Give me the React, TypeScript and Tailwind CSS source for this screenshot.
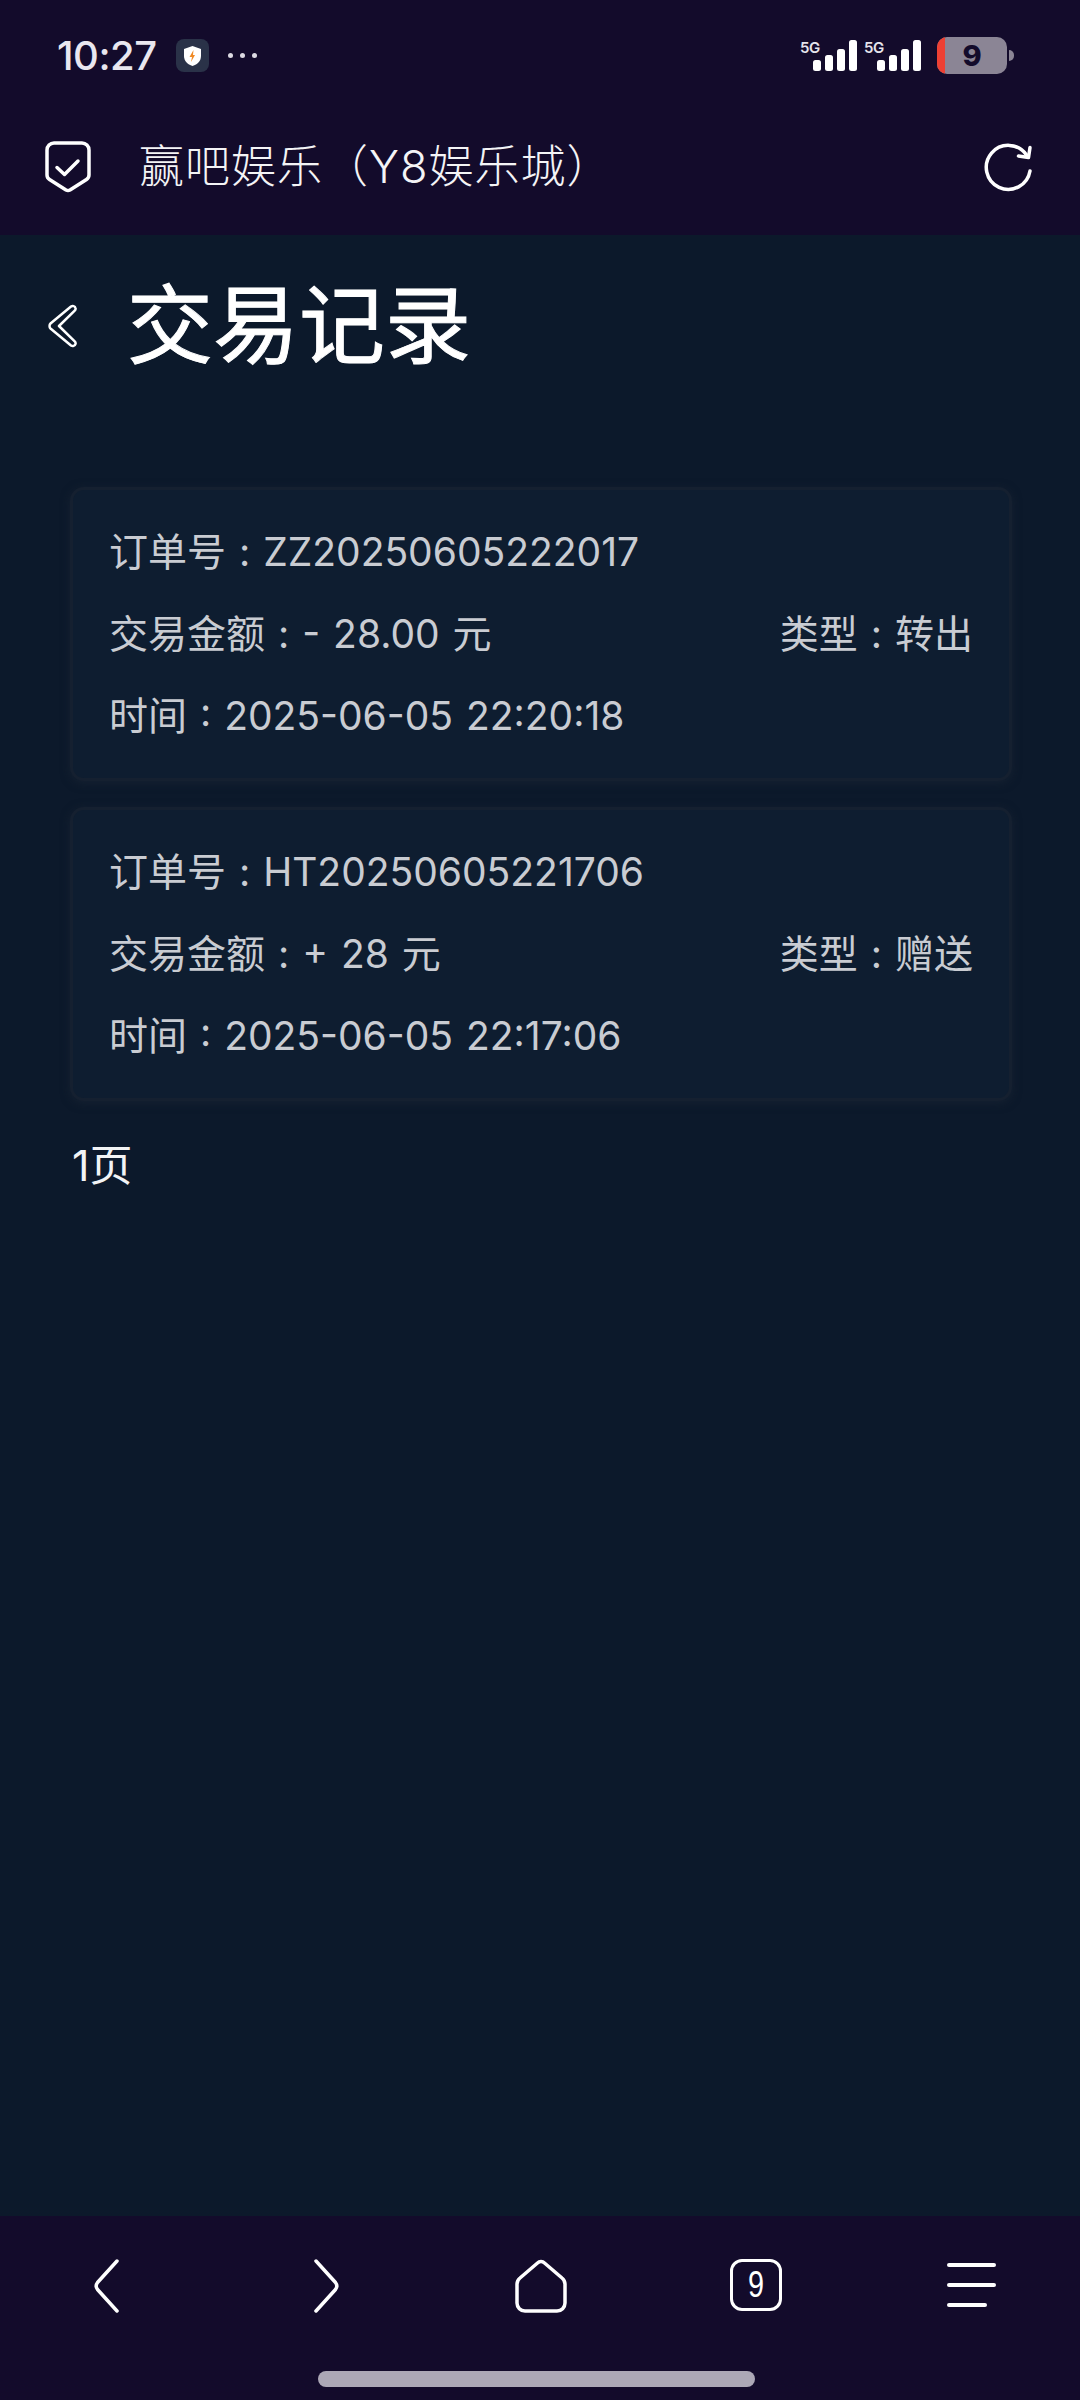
const FONT = "font-['Inter','Noto_Sans_CJK_SC',sans-serif]";

const records = [
  { no: "ZZ20250605222017", amount: "- 28.00 元", type: "转出", time: "2025-06-05 22:20:18" },
  { no: "HT20250605221706", amount: "+ 28 元", type: "赠送", time: "2025-06-05 22:17:06" },
];

function Signal() {
  return (
    <div className="relative h-[37px] w-[64px]">
      <span className="absolute left-0 top-[3px] font-['Inter',sans-serif] text-[15px] leading-[15px] font-semibold tracking-[-0.5px] text-[#e6e4ec]">5G</span>
      <svg className="absolute left-[12px] top-[3px]" width="46" height="32" viewBox="0 0 46 32" fill="#fff">
        <rect x="1" y="20" width="8" height="11" rx="2.5" />
        <rect x="13" y="15" width="8" height="16" rx="2.5" />
        <rect x="25" y="9" width="8" height="22" rx="2.5" />
        <rect x="37" y="0" width="8" height="31" rx="2.5" />
      </svg>
    </div>
  );
}

function Battery() {
  return (
    <div className="flex items-center gap-[2px]">
      <div className="flex h-[37px] w-[70px] overflow-hidden rounded-[10px] bg-[#8b8595]">
        <div className="h-full w-[8px] bg-[#ee4033]" />
        <span className="w-[54px] text-center font-['Inter',sans-serif] text-[29px] leading-[37px] font-extrabold text-[#130b2b]">9</span>
      </div>
      <div className="h-[11px] w-[5px] rounded-r-full bg-[#8b8595]" />
    </div>
  );
}

function StatusBar() {
  return (
    <div className="flex h-[108px] items-center pt-[3px] pr-[66px] pl-[57px]">
      <span className="font-['Inter',sans-serif] text-[40px] leading-none font-medium tracking-[-0.5px] text-[#e9e7ef]">10:27</span>
      <div className="ml-[19px] flex h-[33px] w-[33px] items-center justify-center rounded-[8px] bg-[#2a3248]">
        <svg width="19" height="22" viewBox="0 0 19 22">
          <path d="M9.5 1 18 4v7c0 5-3.5 8.5-8.5 10C4.500 19.500 1 16 1 11V4z" fill="#fff" />
          <path d="M10.500 5 6.500 12h2.500l-1 5 4-7H10z" fill="#f08a24" />
        </svg>
      </div>
      <div className="ml-[19px] flex gap-[7px]">
        <span className="h-[5px] w-[5px] rounded-full bg-[#dcdae2]" />
        <span className="h-[5px] w-[5px] rounded-full bg-[#dcdae2]" />
        <span className="h-[5px] w-[5px] rounded-full bg-[#dcdae2]" />
      </div>
      <div className="ml-auto flex items-center">
        <Signal />
        <Signal />
        <div className="ml-[9px]">
          <Battery />
        </div>
      </div>
    </div>
  );
}

function AddressBar() {
  return (
    <div className="flex h-[127px] items-start pt-[33px] pr-[46px] pl-[45px]">
      <svg width="46" height="52" viewBox="0 0 46 52" fill="none" stroke="#fff" strokeWidth="3.500" strokeLinejoin="round" strokeLinecap="round">
        <path d="M9 2h28a7 7 0 0 1 7 7v25c0 2-1 3.500-2.500 4.500L25 49a4 4 0 0 1-4 0L4.500 38.500C3 37.500 2 36 2 34V9a7 7 0 0 1 7-7z" />
        <path d="M12 26.500l7.500 7L33 20" />
      </svg>
      <span className={`${FONT} ml-[48px] text-[45px] leading-[52px] font-light tracking-[1px] text-[#f4f4f6]`}>赢吧娱乐（Y8娱乐城）</span>
      <svg className="mt-[1px] ml-auto" width="50" height="50" viewBox="0 0 50 50" fill="none" stroke="#fff" strokeWidth="3.500" strokeLinecap="round" strokeLinejoin="round">
        <path d="M46 29a22 22 0 1 1-3.500-16" />
        <path d="M46 5.500 44.500 15.500 34.500 14" />
      </svg>
    </div>
  );
}

function PageTitle() {
  return (
    <div className="flex h-[136px] items-center pt-[46px] pl-[47px]">
      <svg width="30" height="44" viewBox="0 0 30 44" fill="none" stroke="#fff" strokeWidth="2.500" strokeLinejoin="round">
        <path d="M24 2.500c1.500-1 4-.5 4.500 1.500.3 1-.2 2-.8 2.600L12 22l15.700 15.400c.6.600 1.100 1.600.8 2.600-.5 2-3 2.500-4.500 1.500L3.500 24.500c-1.300-1.200-1.300-3.800 0-5z" />
      </svg>
      <h1 className={`${FONT} ml-[50px] text-[86px] leading-none font-normal text-white [-webkit-text-stroke:1px_white]`}>交易记录</h1>
    </div>
  );
}

function RecordCard({ no, amount, type, time }: (typeof records)[number]) {
  return (
    <div className="rounded-[14px] border-[3px] border-[#152030] bg-[#0e1d30] pt-[21px] pr-[36px] pb-[21px] pl-[36px] shadow-[0_2px_10px_rgba(30,40,55,0.55)]">
      <p className="h-[82px] leading-[82px]">订单号 : {no}</p>
      <div className="flex h-[82px] items-center justify-between">
        <span>交易金额 : {amount}</span>
        <span>类型 : {type}</span>
      </div>
      <p className="h-[82px] leading-[82px]">时间 : {time}</p>
    </div>
  );
}

function BottomNav() {
  const icon = { fill: "none", stroke: "#fff", strokeWidth: 3.5, strokeLinecap: "round", strokeLinejoin: "round" } as const;
  return (
    <div className="relative mt-auto h-[184px] shrink-0 bg-[#130b2b]">
      <div className="flex items-start pt-[43px] pl-[94px]">
        <svg {...icon} width="26" height="54" viewBox="0 0 26 54">
          <path d="M23 2 3.500 23.500c-1.500 2-1.500 5 0 7L23 52" />
        </svg>
        <svg {...icon} className="ml-[193px]" width="26" height="54" viewBox="0 0 26 54">
          <path d="M3 2 22.500 23.500c1.500 2 1.500 5 0 7L3 52" />
        </svg>
        <svg {...icon} className="ml-[175px]" width="54" height="54" viewBox="0 0 54 54">
          <path d="M23.500 4a5 5 0 0 1 7 0L48 19a8 8 0 0 1 3 6v19a8 8 0 0 1-8 8H11a8 8 0 0 1-8-8V25a8 8 0 0 1 3-6z" />
        </svg>
        <div className="ml-[162px] flex h-[52px] w-[52px] items-center justify-center rounded-[12px] border-[3.500px] border-white text-white">
          <span className="scale-x-[0.8] font-['Liberation_Sans',sans-serif] text-[36px] leading-none">9</span>
        </div>
        <div className="mt-[4px] ml-[165px] flex w-[49px] flex-col gap-[16px]">
          <div className="h-[4px] rounded-full bg-white" />
          <div className="h-[4px] rounded-full bg-white" />
          <div className="h-[4px] w-[40px] rounded-full bg-white" />
        </div>
      </div>
      <div className="absolute top-[155px] left-[318px] h-[16px] w-[437px] rounded-full bg-[#aca8b6]" />
    </div>
  );
}

export default function App() {
  return (
    <div className={`${FONT} flex h-[2400px] w-[1080px] flex-col bg-[#0c192b]`}>
      <header className="bg-[#130b2b]">
        <StatusBar />
        <AddressBar />
      </header>
      <PageTitle />
      <main className="pt-[116px] pr-[68px] pl-[70px]">
        <div className="flex flex-col gap-[26px] text-[39px] font-normal [word-spacing:2px] text-[#c9ccd2]">
          {records.map((r) => (
            <RecordCard key={r.no} {...r} />
          ))}
        </div>
        <p className="mt-[36px] pl-[2px] text-[43px] leading-[56px] font-normal text-[#f2f3f5]">1页</p>
      </main>
      <BottomNav />
    </div>
  );
}
